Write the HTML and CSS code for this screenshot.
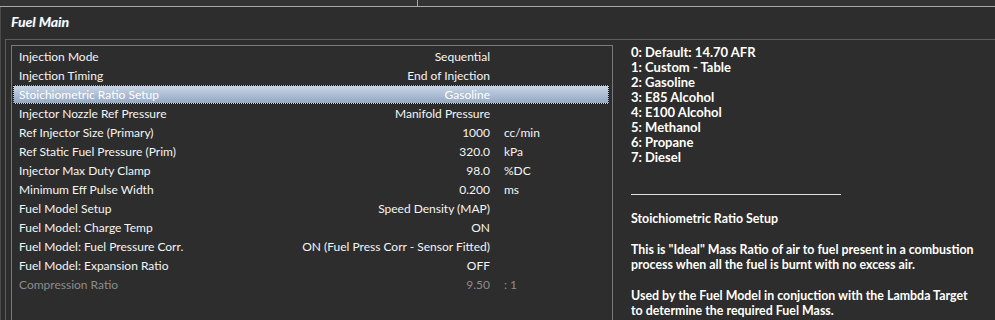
FILE: index.html
```html
<!DOCTYPE html>
<html lang="en">
<head>
    <meta charset="UTF-8">
    <title>Fuel Main</title>
    <link rel="stylesheet" href="styles.css">
</head>
<body>
    <div class="topbar">
        <div class="tab"></div>
        <div class="tab-rest"></div>
    </div>
    <div class="window">
        <div class="title">Fuel Main</div>
        <div class="group">
            <div class="listbox">
                <div class="row"><span class="label">Injection Mode</span><span class="value">Sequential</span><span class="unit"></span></div>
                <div class="row"><span class="label">Injection Timing</span><span class="value">End of Injection</span><span class="unit"></span></div>
                <div class="row selected"><span class="label">Stoichiometric Ratio Setup</span><span class="value">Gasoline</span><span class="unit"></span></div>
                <div class="row"><span class="label">Injector Nozzle Ref Pressure</span><span class="value">Manifold Pressure</span><span class="unit"></span></div>
                <div class="row"><span class="label">Ref Injector Size (Primary)</span><span class="value">1000</span><span class="unit">cc/min</span></div>
                <div class="row"><span class="label">Ref Static Fuel Pressure (Prim)</span><span class="value">320.0</span><span class="unit">kPa</span></div>
                <div class="row"><span class="label">Injector Max Duty Clamp</span><span class="value">98.0</span><span class="unit">%DC</span></div>
                <div class="row"><span class="label">Minimum Eff Pulse Width</span><span class="value">0.200</span><span class="unit">ms</span></div>
                <div class="row"><span class="label">Fuel Model Setup</span><span class="value">Speed Density (MAP)</span><span class="unit"></span></div>
                <div class="row"><span class="label">Fuel Model: Charge Temp</span><span class="value">ON</span><span class="unit"></span></div>
                <div class="row"><span class="label">Fuel Model: Fuel Pressure Corr.</span><span class="value">ON (Fuel Press Corr - Sensor Fitted)</span><span class="unit"></span></div>
                <div class="row"><span class="label">Fuel Model: Expansion Ratio</span><span class="value">OFF</span><span class="unit"></span></div>
                <div class="row disabled"><span class="label">Compression Ratio</span><span class="value">9.50</span><span class="unit">: 1</span></div>
            </div>
            <div class="help">
                <div class="options">
                    <div>0: Default: 14.70 AFR</div>
                    <div>1: Custom - Table</div>
                    <div>2: Gasoline</div>
                    <div>3: E85 Alcohol</div>
                    <div>4: E100 Alcohol</div>
                    <div>5: Methanol</div>
                    <div>6: Propane</div>
                    <div>7: Diesel</div>
                </div>
                <div class="rule"></div>
                <p>Stoichiometric Ratio Setup</p>
                <p>This is "Ideal" Mass Ratio of air to fuel present in a combustion process when all the fuel is burnt with no excess air.</p>
                <p>Used by the Fuel Model in conjuction with the Lambda Target to determine the required Fuel Mass.</p>
            </div>
        </div>
    </div>
</body>
</html>
```

FILE: styles.css
```css
body {
    margin: 0;
    background-color: #2d2d2d;
    color: #f4f4f4;
    font-family: Lato, "Open Sans", sans-serif;
    font-size: 12px;
    width: 995px;
    height: 320px;
    overflow: hidden;
}
.topbar {
    display: flex;
    height: 6px;
    background-color: #333333;
    border-bottom: 1px solid #a8a8a8;
}
.tab {
    width: 417px;
    border-right: 1px solid #a8a8a8;
}
.window {
    border-left: 1px solid #4a4a4a;
}
.title {
    height: 32px;
    line-height: 29px;
    padding-left: 10px;
    font-weight: bold;
    font-style: italic;
    font-size: 14px;
    color: #ffffff;
    text-shadow: 1px 0 0 rgba(120, 160, 255, 0.35);
}
.group {
    display: flex;
    margin-left: 4px;
    border-top: 1px solid #5e5e5e;
    border-left: 1px solid #5e5e5e;
    height: 280px;
}
.listbox {
    margin: 5px 0 0 5px;
    width: 598px;
    border: 1px solid #7a7a7a;
    border-bottom: none;
    padding: 1px 0 0 2px;
}
.row {
    display: grid;
    grid-template-columns: 280px 196px 118px;
    height: 17px;
    line-height: 17px;
    border: 1px solid transparent;
    width: 594px;
    box-sizing: content-box;
    margin-left: -1px;
}
.label {
    padding-left: 5px;
    white-space: nowrap;
}
.value {
    text-align: right;
    white-space: nowrap;
}
.unit {
    padding-left: 14px;
}
.row.selected {
    border: 1px dotted #111111;
    background: linear-gradient(#c8d5e5, #93a8c4);
    color: #ffffff;
}
.row.disabled {
    color: #8c8c8c;
}
.help {
    flex: 1;
    padding: 5px 0 0 18px;
    font-weight: bold;
    font-size: 13px;
    line-height: 15px;
    color: #ffffff;
}
.rule {
    width: 210px;
    border-top: 1px solid #e0e0e0;
    margin: 29px 0 16px 0;
}
.help p {
    margin: 0 0 16px 0;
    width: 350px;
    font-size: 12.4px;
}
```
